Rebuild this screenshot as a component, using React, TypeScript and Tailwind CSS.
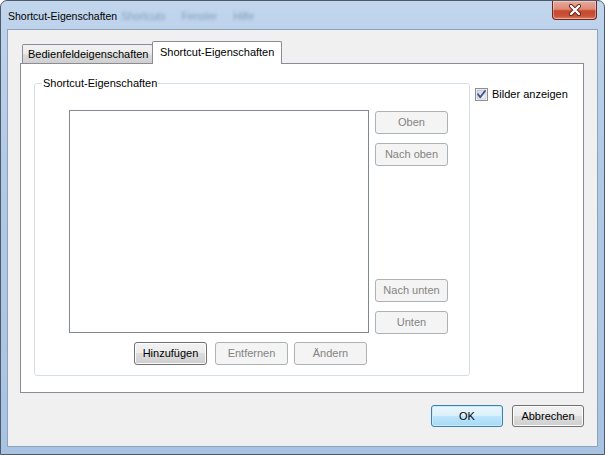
import React from "react";

const font = "font-['Liberation_Sans',Arial,sans-serif]";

function Btn({
  children,
  kind = "normal",
  className = "",
}: {
  children: React.ReactNode;
  kind?: "normal" | "disabled" | "default";
  className?: string;
}) {
  const base =
    "h-[23px] w-[73px] rounded-[3px] border text-[11px] leading-none flex items-center justify-center shrink-0";
  const styles =
    kind === "disabled"
      ? "border-[#adb2b5] bg-[#f4f4f4] text-[#838383]"
      : kind === "default"
      ? "border-[#3c7fb1] bg-[linear-gradient(to_bottom,#eaf6fd_0%,#d9f0fc_50%,#bee6fd_50%,#a7d9f5_100%)] shadow-[inset_0_0_0_1px_#c6ebfb] text-black"
      : "border-[#707070] bg-[linear-gradient(to_bottom,#f2f2f2_0%,#ebebeb_50%,#dddddd_50%,#cfcfcf_100%)] shadow-[inset_0_0_0_1px_#fcfcfc] text-black";
  return <div className={`${base} ${styles} ${className}`}>{children}</div>;
}

function CheckBox() {
  return (
    <svg width="13" height="13" viewBox="0 0 13 13" className="shrink-0">
      <defs>
        <linearGradient id="cbg" x1="0" y1="0" x2="1" y2="1">
          <stop offset="0" stopColor="#cbd2de" />
          <stop offset="1" stopColor="#f6f7f9" />
        </linearGradient>
      </defs>
      <rect x="0.5" y="0.5" width="12" height="12" fill="#ffffff" stroke="#8e8f8f" />
      <rect x="2" y="2" width="9" height="9" fill="url(#cbg)" stroke="#aeb3b9" strokeWidth="0.6" />
      <path
        d="M3 6.2 L5.2 9.2 L10 3"
        fill="none"
        stroke="#3c4f8c"
        strokeWidth="1.8"
        strokeLinecap="round"
        strokeLinejoin="round"
      />
    </svg>
  );
}

function CloseButton() {
  return (
    <div className="mr-[7px] w-[45px] h-[19px] rounded-b-[4px] border border-t-0 border-[#6b2a21] bg-[linear-gradient(to_bottom,#e9a99b_0%,#dd8a77_45%,#c8472f_55%,#c9543a_85%,#de8a6b_100%)] shadow-[inset_0_0_0_1px_rgba(255,255,255,0.35)] flex items-center justify-center shrink-0">
      <svg width="14" height="12" viewBox="0 0 14 12">
        <path d="M3 2 L11 10 M11 2 L3 10" stroke="#5b1c12" strokeWidth="4" strokeLinecap="round" />
        <path d="M3 2 L11 10 M11 2 L3 10" stroke="#ffffff" strokeWidth="2.4" strokeLinecap="round" />
      </svg>
    </div>
  );
}

export default function App() {
  return (
    <div
      className={`${font} w-[605px] h-[455px] overflow-hidden rounded-t-[7px] border border-[#4d5a6a] bg-[linear-gradient(to_bottom,#c2d6ed_0%,#bcd2ea_8%,#b0c9e5_40%,#a8c3e2_100%)] flex flex-col`}
    >
      {/* Title bar */}
      <div className="h-[28px] flex items-start shrink-0 relative">
        <div className="pl-[7px] pt-[8px] text-[10.5px] text-black flex items-center">
          <span>Shortcut-Eigenschaften</span>
          <span className="ml-[4px] text-[#4f6888] opacity-50 blur-[1.4px]">Shortcuts</span>
          <span className="ml-[16px] text-[#4f6888] opacity-50 blur-[1.4px]">Fenster</span>
          <span className="ml-[16px] text-[#4f6888] opacity-50 blur-[1.4px]">Hilfe</span>
        </div>
        <div className="flex-1" />
        <CloseButton />
      </div>

      {/* Client area */}
      <div className="mx-[6px] h-[418px] border border-[#8ea2ba] bg-[#f0f0f0] flex flex-col pl-[12px] pr-[13px] pt-[12px] shrink-0">
        {/* Tabs */}
        <div className="h-[21px] flex items-end pl-[2px] text-[11px] text-black">
          <div className="w-[131px] h-[19px] border border-b-0 border-[#898c95] rounded-t-[2px] bg-[linear-gradient(to_bottom,#f2f2f2_0%,#ebebeb_50%,#dddddd_50%,#cfcfcf_100%)] flex items-center pl-[5px] pt-[1px]">
            Bedienfeldeigenschaften
          </div>
          <div className="relative z-10 -ml-px -mb-px w-[130px] h-[23px] border border-b-0 border-[#898c95] rounded-t-[2px] bg-white flex items-center pl-[7px] pb-[2px]">
            Shortcut-Eigenschaften
          </div>
        </div>

        {/* Tab panel */}
        <div className="h-[330px] border border-[#898c95] bg-white flex items-start">
          {/* Group box */}
          <div className="relative ml-[13px] mt-[19px] w-[436px] h-[293px] rounded-[3px] border border-[#d5dfe5] shrink-0">
            <span className="absolute left-[7px] top-[-7px] bg-white px-px text-[11px] leading-[13px] text-black">
              Shortcut-Eigenschaften
            </span>
            <div className="pl-[34px] pt-[26px] flex flex-col">
              <div className="flex items-start">
                <div className="w-[300px] h-[223px] border border-[#828790] bg-white shrink-0" />
                <div className="ml-[6px] mt-[1px] h-[223px] flex flex-col justify-between">
                  <div className="flex flex-col gap-[9px]">
                    <Btn kind="disabled">Oben</Btn>
                    <Btn kind="disabled">Nach oben</Btn>
                  </div>
                  <div className="flex flex-col gap-[9px]">
                    <Btn kind="disabled">Nach unten</Btn>
                    <Btn kind="disabled">Unten</Btn>
                  </div>
                </div>
              </div>
              <div className="mt-[8px] pl-[65px] flex">
                <Btn>Hinzufügen</Btn>
                <Btn kind="disabled" className="ml-[8px]">
                  Entfernen
                </Btn>
                <Btn kind="disabled" className="ml-[6px]">
                  Ändern
                </Btn>
              </div>
            </div>
          </div>

          {/* Checkbox */}
          <div className="ml-[5px] mt-[22px] flex items-center gap-[4px] text-[11px] text-black">
            <CheckBox />
            <span>Bilder anzeigen</span>
          </div>
        </div>

        {/* Dialog buttons */}
        <div className="mt-[12px] flex justify-end gap-[9px]">
          <Btn kind="default" className="!w-[72px] !h-[22px]">
            OK
          </Btn>
          <Btn className="!w-[72px] !h-[22px]">Abbrechen</Btn>
        </div>
      </div>
    </div>
  );
}
